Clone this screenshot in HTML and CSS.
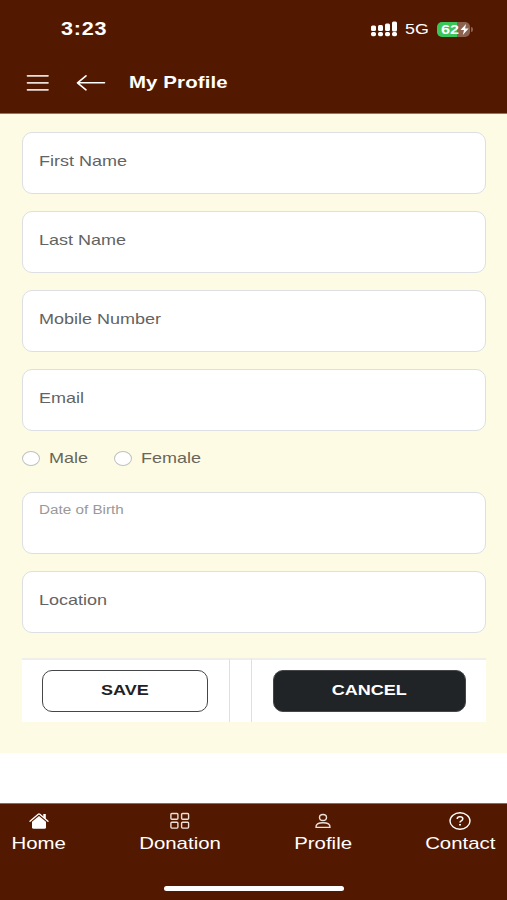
FILE: index.html
```html
<!DOCTYPE html>
<html lang="en">
<head>
<meta charset="utf-8">
<title>My Profile</title>
<link rel="stylesheet" href="styles.css">
</head>
<body>
<header class="header">
  <div class="status">
    <span class="wide time">3:23</span>
    <svg class="signal" width="27" height="16" viewBox="0 0 27 16" fill="#fff">
      <rect x="0" y="4.5" width="5" height="5.5" rx="1.5"/><rect x="7" y="4" width="5" height="6" rx="1.5"/><rect x="14" y="2.5" width="5" height="7.5" rx="1.5"/><rect x="21" y="0.5" width="5" height="10" rx="1.5"/>
      <rect x="0" y="11" width="5" height="4.2" rx="1.7"/><rect x="7" y="11" width="5" height="4.2" rx="1.7"/><rect x="14" y="11" width="5" height="4.2" rx="1.7"/><rect x="21" y="11" width="5" height="4.2" rx="1.7"/>
    </svg>
    <span class="wide network">5G</span>
    <div class="battery">
      <span class="wide level">62</span>
      <svg class="bolt" width="9" height="11" viewBox="0 0 9 11" fill="#fff"><path d="M6 0L0.5 6H4L2.8 11L8.6 4.6H5.1Z"/></svg>
    </div>
    <i class="battery-tip"></i>
  </div>
  <div class="titlebar">
    <svg class="menu" width="24" height="18" viewBox="0 0 24 18" stroke="#eadfd9" stroke-width="1.7" stroke-linecap="round"><path d="M1.5 1.8H22M1.5 8.8H22M1.5 15.8H22"/></svg>
    <svg class="back" width="30" height="18" viewBox="0 0 30 18" fill="none" stroke="#fff" stroke-width="1.6" stroke-linecap="round" stroke-linejoin="round"><path d="M28.5 8.8H1.5M10 1.8L1.5 8.8L10 15.8"/></svg>
    <h1 class="wide title">My Profile</h1>
  </div>
</header>
<main class="form">
  <div class="field"><span class="wide">First Name</span></div>
  <div class="field"><span class="wide">Last Name</span></div>
  <div class="field"><span class="wide">Mobile Number</span></div>
  <div class="field"><span class="wide">Email</span></div>
  <div class="choices">
    <div class="choice male"><i class="radio"></i><span class="wide">Male</span></div>
    <div class="choice"><i class="radio"></i><span class="wide">Female</span></div>
  </div>
  <div class="field date"><span class="wide">Date of Birth</span></div>
  <div class="field"><span class="wide">Location</span></div>
  <div class="actions">
    <div class="cell save-cell"><div class="button save"><span class="wide">SAVE</span></div></div>
    <div class="cell gap-cell"></div>
    <div class="cell cancel-cell"><div class="button cancel"><span class="wide">CANCEL</span></div></div>
  </div>
</main>
<nav class="nav">
  <div class="tabs">
    <div class="tab home">
      <svg width="22" height="18" viewBox="0 0 22 18"><path d="M4 9.8L11 4L18 9.8V15.3Q18 16.8 16.2 16.8H5.8Q4 16.8 4 15.3Z" fill="#fff"/><path d="M2 9.3L10.2 2.2Q11 1.5 11.8 2.2L20 9.3" fill="none" stroke="#fff" stroke-width="1.3" stroke-linecap="round"/><path d="M15.3 2H17.8V7L15.3 5Z" fill="#fff"/></svg>
      <span class="wide">Home</span>
    </div>
    <div class="tab donation">
      <svg width="22" height="18" viewBox="0 0 22 18" fill="none" stroke="#eedfd8" stroke-width="1.4"><rect x="1.9" y="1.5" width="7" height="5.8" rx="1"/><rect x="12.6" y="1.5" width="7" height="5.8" rx="1"/><rect x="1.9" y="10.3" width="7" height="5.8" rx="1"/><rect x="12.6" y="10.3" width="7" height="5.8" rx="1"/></svg>
      <span class="wide">Donation</span>
    </div>
    <div class="tab profile">
      <svg width="22" height="18" viewBox="0 0 22 18" fill="none" stroke="#eedfd8" stroke-width="1.4"><ellipse cx="11" cy="5.5" rx="3.5" ry="3"/><path d="M4 15.4H18Q18.4 10.8 11 10.8Q3.6 10.8 4 15.4Z" stroke-linejoin="round"/></svg>
      <span class="wide">Profile</span>
    </div>
    <div class="tab contact">
      <svg width="22" height="18" viewBox="0 0 22 18" fill="none" stroke="#fff"><ellipse cx="11" cy="9" rx="10" ry="8.2" stroke-width="1.4"/><path d="M8.2 7Q8.2 4.8 11 4.8Q13.8 4.8 13.8 6.8Q13.8 8 12.3 8.8Q11 9.5 11 10.6" stroke-width="1.5"/><path d="M11 12V13.5" stroke-width="1.9"/></svg>
      <span class="wide">Contact</span>
    </div>
  </div>
  <div class="home-bar"></div>
</nav>
</body>
</html>
```
FILE: styles.css
```css
* { box-sizing: border-box; }
body {
  margin: 0;
  width: 507px;
  height: 900px;
  display: flex;
  flex-direction: column;
  overflow: hidden;
  background: #fff;
  font-family: "Liberation Sans", Arial, sans-serif;
}
svg { display: block; flex: none; }
.wide {
  display: block;
  width: max-content;
  white-space: nowrap;
  transform: scaleX(1.2);
  transform-origin: left center;
}
.header {
  height: 114px;
  background: #531900;
  border-bottom: 1px solid #927567;
  color: #fff;
}
.status {
  height: 58px;
  display: flex;
  align-items: center;
  padding-left: 60.5px;
}
.time { width: 310px; font-size: 18px; font-weight: 700; line-height: 20px; letter-spacing: .6px; }
.network { width: 32px; margin-left: 7.5px; font-size: 15.5px; line-height: 18px; transform: scaleX(1.15); }
.battery {
  width: 33px;
  height: 15px;
  display: flex;
  align-items: center;
  padding-left: 4px;
  border-radius: 5px;
  background: linear-gradient(90deg, #3cc65a 62%, #8b6150 62%);
}
.level { width: 19px; font-size: 13.5px; line-height: 15px; font-weight: 700; }
.battery-tip { width: 2px; height: 5px; margin-left: 1px; border-radius: 0 2px 2px 0; background: #8b6150; }
.titlebar {
  height: 50px;
  display: flex;
  align-items: center;
  padding-left: 26px;
}
.menu, .back { margin-bottom: 1px; }
.back { margin-left: 26px; }
.title { margin: 0 0 0 22.5px; font-size: 17px; line-height: 20px; letter-spacing: .1px; }
.form {
  height: 639px;
  flex: none;
  display: flex;
  flex-direction: column;
  padding: 18px 21px 0 21.5px;
  background: #fefbe4;
  color: #636363;
  font-size: 15px;
}
.field {
  height: 62px;
  flex: none;
  margin-bottom: 17px;
  padding: 19px 0 0 16px;
  border: 1.5px solid #dcdfe3;
  border-radius: 10px;
  background: #fff;
  line-height: 18px;
}
.date { padding-top: 9px; font-size: 12.5px; line-height: 16px; color: #999; }
.date .wide { transform: scaleX(1.22); }
.choices { height: 44px; display: flex; padding-top: 1px; }
.choice { display: flex; height: 18px; align-items: center; line-height: 18px; color: #68665c; }
.male { width: 92.5px; }
.radio {
  width: 18px;
  height: 15px;
  margin-right: 9px;
  border: 1px solid #bfc0c3;
  border-radius: 50%;
  background: #fff;
}
.actions { display: flex; height: 64px; margin-top: 8px; }
.cell { background: #fff; border-top: 2px solid #eeeeeb; padding-top: 10px; }
.save-cell { width: 208px; padding-left: 20px; border-right: 1.5px solid #dedfe0; }
.gap-cell { width: 22px; border-right: 1.5px solid #dedfe0; }
.cancel-cell { flex: 1; padding-left: 21px; }
.button {
  height: 42px;
  display: flex;
  align-items: center;
  justify-content: center;
  padding-bottom: 3px;
  border: 1.5px solid #444648;
  border-radius: 10px;
  color: #1f2225;
  font-size: 15px;
  font-weight: 700;
}
.button .wide, .tab .wide { transform-origin: center; }
.save { width: 166px; }
.cancel { width: 193px; background: #202427; color: #fff; }
.nav {
  height: 97px;
  margin-top: auto;
  background: #531900;
  border-top: 1px solid #8a6c5d;
  color: #fff;
}
.tabs { display: flex; justify-content: space-between; padding: 8px 11px 0 12px; }
.tab { display: flex; flex-direction: column; align-items: center; font-size: 17px; line-height: 22px; }
.tab .wide { margin-top: 3px; }
.home { width: 54px; }
.donation { width: 83px; }
.profile { width: 59px; }
.contact { width: 71px; }
.home-bar { width: 180px; height: 5px; margin: 31px auto 0; border-radius: 3px; background: #fff; }
```
